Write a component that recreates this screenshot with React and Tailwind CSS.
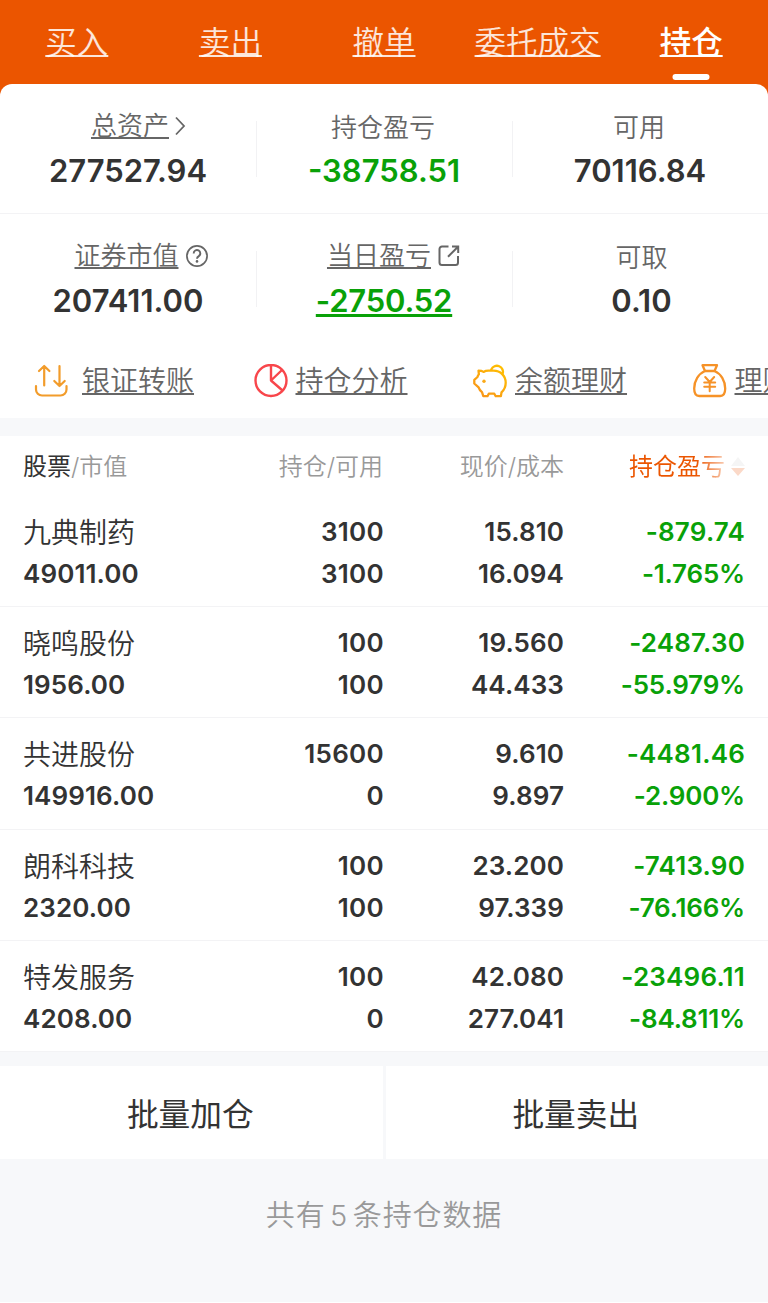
const tabs = ['买入', '卖出', '撤单', '委托成交', '持仓']

const holdings = [
  { name: '九典制药', value: '49011.00', qty: '3100', usable: '3100', price: '15.810', cost: '16.094', profit: '-879.74', rate: '-1.765%' },
  { name: '晓鸣股份', value: '1956.00', qty: '100', usable: '100', price: '19.560', cost: '44.433', profit: '-2487.30', rate: '-55.979%' },
  { name: '共进股份', value: '149916.00', qty: '15600', usable: '0', price: '9.610', cost: '9.897', profit: '-4481.46', rate: '-2.900%' },
  { name: '朗科科技', value: '2320.00', qty: '100', usable: '100', price: '23.200', cost: '97.339', profit: '-7413.90', rate: '-76.166%' },
  { name: '特发服务', value: '4208.00', qty: '100', usable: '0', price: '42.080', cost: '277.041', profit: '-23496.11', rate: '-84.811%' },
]

const linkLine = 'underline [text-decoration-skip-ink:none] decoration-[1.6px]'

function ChevronIcon() {
  return (
    <svg width="12" height="20" viewBox="0 0 12 20" fill="none" stroke="#666" strokeWidth="1.8" className="ml-[5px]">
      <path d="M2 1.5 10 10 2 18.5" />
    </svg>
  )
}

function HelpIcon() {
  return (
    <svg width="22" height="22" viewBox="0 0 22 22" fill="none" stroke="#666" strokeWidth="1.7" className="ml-[7px]">
      <circle cx="11" cy="11" r="10.1" />
      <path d="M7.7 8.4a3.3 3.3 0 1 1 5.100 2.700c-1.200.8-1.800 1.300-1.800 2.600" strokeWidth="1.9" />
      <circle cx="11" cy="16.4" r="1.3" fill="#666" stroke="none" />
    </svg>
  )
}

function ShareIcon() {
  return (
    <svg width="22" height="22" viewBox="0 0 22 22" fill="none" stroke="#666" strokeWidth="2" className="ml-[7px]">
      <path d="M10.500 1.500H4A2.500 2.500 0 0 0 1.500 4v13.500A2.500 2.500 0 0 0 4 20h13.500a2.500 2.500 0 0 0 2.500-2.500V11" />
      <path d="M14 1.500h6.200V8M20 1.700 10 11.700" />
    </svg>
  )
}

function TransferIcon() {
  return (
    <svg width="34" height="34" viewBox="0 0 34 34" fill="none" stroke="#f29c2b" strokeWidth="2.2" strokeLinecap="round" strokeLinejoin="round">
      <path d="M10.200 21.500V2M5 7l5.200-5 5.200 5M25.500 2v20M20.300 17l5.200 5 5.200-5" />
      <path d="M2 22v3.500a6 6 0 0 0 6 6h18.500a6 6 0 0 0 6-6V22" />
    </svg>
  )
}

function PieIcon() {
  return (
    <svg width="34" height="34" viewBox="0 0 34 34" fill="none" stroke="#f8464b" strokeWidth="2.4">
      <circle cx="17" cy="16.5" r="15.5" />
      <path d="M17 1.300V16.500L28 6M17 16.500l11.500 10" strokeLinejoin="round" />
    </svg>
  )
}

function PiggyIcon() {
  return (
    <svg width="34" height="34" viewBox="0 0 34 34" fill="none" stroke="url(#piggy)" strokeWidth="2.3" strokeLinecap="round" strokeLinejoin="round">
      <defs>
        <linearGradient id="piggy" x1="0" y1="34" x2="26" y2="0" gradientUnits="userSpaceOnUse">
          <stop stopColor="#f78f1e" />
          <stop offset="1" stopColor="#ffbf00" />
        </linearGradient>
      </defs>
      <path d="M5.500 6.700c2 0 3.500.2 5 1.200 1.500-.9 3-1.200 5-1.200h5c7 0 12.200 5 12.200 12 0 4-1.700 7.300-4.200 9.600l-.6 3.900h-5.200l-1.400-2.500h-5.500l-1.300 2.500H10.300L9 28.200C7.500 27 6.300 25.400 5.600 23.300L1.300 19.500v-3.700L4.500 13c.2-1 .7-2 1.400-2.700Z" />
      <path d="M18.300 5.500a6 6 0 1 1 11.200 4.600" />
      <circle cx="11" cy="17.2" r="1.7" fill="#fbaa19" stroke="none" />
    </svg>
  )
}

function MoneyBagIcon() {
  return (
    <svg width="34" height="34" viewBox="0 0 34 34" fill="none" stroke="#f69227" strokeWidth="2.3" strokeLinecap="round" strokeLinejoin="round">
      <path d="M9.500 1.200h14.500l-2.500 5.800h-9.500Z" />
      <path d="M12 7C5.500 9.700 1.200 17 1.200 24.500c0 5 1.500 7.500 5 7.500h21c3.500 0 5-2.500 5-7.500C32.200 17 28 9.700 21.500 7" />
      <path d="M12.200 13l4.500 5 4.500-5M11.200 18.500h11M11.200 22.700h11M16.700 18.500v8.700" strokeWidth="2" />
    </svg>
  )
}

function Stat({ label, value, icon, link, shift = '', valueClass = 'text-[#333]' }) {
  return (
    <div className="flex h-[129px] flex-col items-center pt-[28px]">
      <div className={`flex h-8 items-center text-[26px] leading-8 text-[#666] ${shift}`}>
        <span className={link ? `${linkLine} underline-offset-[2px]` : ''}>{label}</span>
        {icon}
      </div>
      <div className={`mt-[9px] text-[31px] leading-9 font-semibold ${valueClass}`}>{value}</div>
    </div>
  )
}

function StatRow({ children }) {
  return (
    <div className="grid grid-cols-[256px_256px_256px] bg-[linear-gradient(#f2f2f4,#f2f2f4),linear-gradient(#f2f2f4,#f2f2f4)] bg-[length:1px_56px] bg-[position:256px_37px,512px_37px] bg-no-repeat">
      {children}
    </div>
  )
}

function Action({ icon, label, gap = 'gap-2' }) {
  return (
    <div className={`flex w-[219.5px] shrink-0 items-center ${gap}`}>
      <span className="shrink-0">{icon}</span>
      <span className={`shrink-0 text-[28px] leading-9 whitespace-nowrap text-[#666] underline-offset-[2px] ${linkLine}`}>{label}</span>
    </div>
  )
}

export default function App() {
  return (
    <div className="h-[1302px] w-[768px] overflow-hidden bg-[#f7f8fa] font-[Inter,'Noto_Sans_CJK_SC',sans-serif] font-[350] text-[#333]">
      <div className="bg-[#eb5500]">
        <nav className="flex h-[84px] text-[31.5px] leading-[86px] text-white/85">
          {tabs.map(tab => {
            const active = tab === '持仓'
            return (
              <div key={tab} className={`relative flex-1 text-center whitespace-nowrap ${active ? 'font-medium text-white' : ''}`}>
                <span className={`${linkLine} underline-offset-[1px]`}>{tab}</span>
                {active && <i className="absolute bottom-1 left-1/2 h-[6px] w-[37px] -translate-x-1/2 rounded-full bg-white" />}
              </div>
            )
          })}
        </nav>

        <section className="h-[334px] rounded-t-[12px] bg-white">
          <StatRow>
            <Stat label="总资产" value="277527.94" link icon={<ChevronIcon />} shift="pl-[21px] -mt-[2px] mb-[2px]" />
            <Stat label="持仓盈亏" value="-38758.51" shift="pr-[2px]" valueClass="text-[#09a108]" />
            <Stat label="可用" value="70116.84" shift="pr-[2px]" />
          </StatRow>
          <div className="h-px bg-[#f3f3f5]" />
          <StatRow>
            <Stat label="证券市值" value="207411.00" link icon={<HelpIcon />} shift="pl-[26px] -mt-[2px] mb-[2px]" />
            <Stat label="当日盈亏" value="-2750.52" link icon={<ShareIcon />} shift="pl-[19px] -mt-[2px] mb-[2px]" valueClass="text-[#09a108] tracking-[-0.2px] underline decoration-[3px] underline-offset-[2px]" />
            <Stat label="可取" value="0.10" shift="pl-[3px]" valueClass="pl-[3px] text-[#333]" />
          </StatRow>
          <div className="flex h-[75px] overflow-hidden pt-px pl-[34px]">
            <Action icon={<TransferIcon />} label="银证转账" gap="gap-[14px]" />
            <Action icon={<PieIcon />} label="持仓分析" />
            <Action icon={<PiggyIcon />} label="余额理财" />
            <Action icon={<MoneyBagIcon />} label="理财" />
          </div>
        </section>
      </div>

      <section className="mt-[18px] bg-white">
        <div className="grid h-[60px] grid-cols-[360px_181px_181px] items-center px-[23px] pt-px text-right text-[24px] text-[#999]">
          <div className="flex justify-between">
            <span><span className="font-normal text-[#333]">股票</span>/市值</span>
            <span>持仓/可用</span>
          </div>
          <span>现价/成本</span>
          <div className="flex items-center justify-end gap-[6px]">
            <span className="bg-linear-to-r from-[#eb5500] from-70% to-[#eb5500]/30 bg-clip-text font-normal text-transparent">持仓盈亏</span>
            <svg width="14" height="20" viewBox="0 0 14 20">
              <path d="M7 0 14 9H0Z" fill="#f5f5f5" />
              <path d="M0 11h14l-7 8Z" fill="#fbd9c8" />
            </svg>
          </div>
        </div>

        {holdings.map(h => (
          <div key={h.name} className="grid h-[111.2px] grid-cols-[360px_181px_181px] border-b border-[#f3f3f5] px-[23px] pt-[15px] text-right text-[26px] leading-[42px] font-semibold">
            <div className="flex justify-between">
              <div className="text-left tracking-[0.1px]">
                <p className="h-[42px] text-[28px] leading-[44px] font-[350] tracking-normal">{h.name}</p>
                <p>{h.value}</p>
              </div>
              <div className="-mr-px tracking-[0.3px]">
                <p>{h.qty}</p>
                <p>{h.usable}</p>
              </div>
            </div>
            <div className="tracking-[0.1px]">
              <p>{h.price}</p>
              <p>{h.cost}</p>
            </div>
            <div className="text-[#09a108]">
              <p className="tracking-[0.2px]">{h.profit}</p>
              <p className="tracking-[-0.2px]">{h.rate}</p>
            </div>
          </div>
        ))}
      </section>

      <div className="mt-[14px] flex h-[93px] gap-[3px] text-[31.7px]">
        <button className="flex-1 bg-white pt-[5px] pr-[2px] font-normal">批量加仓</button>
        <button className="flex-1 bg-white pt-[5px] pr-[2px] font-normal">批量卖出</button>
      </div>

      <p className="pt-[35px] text-center text-[29px] leading-[44px] tracking-[0.9px] text-[#999] [word-spacing:-4.5px]">共有 5 条持仓数据</p>
    </div>
  )
}
